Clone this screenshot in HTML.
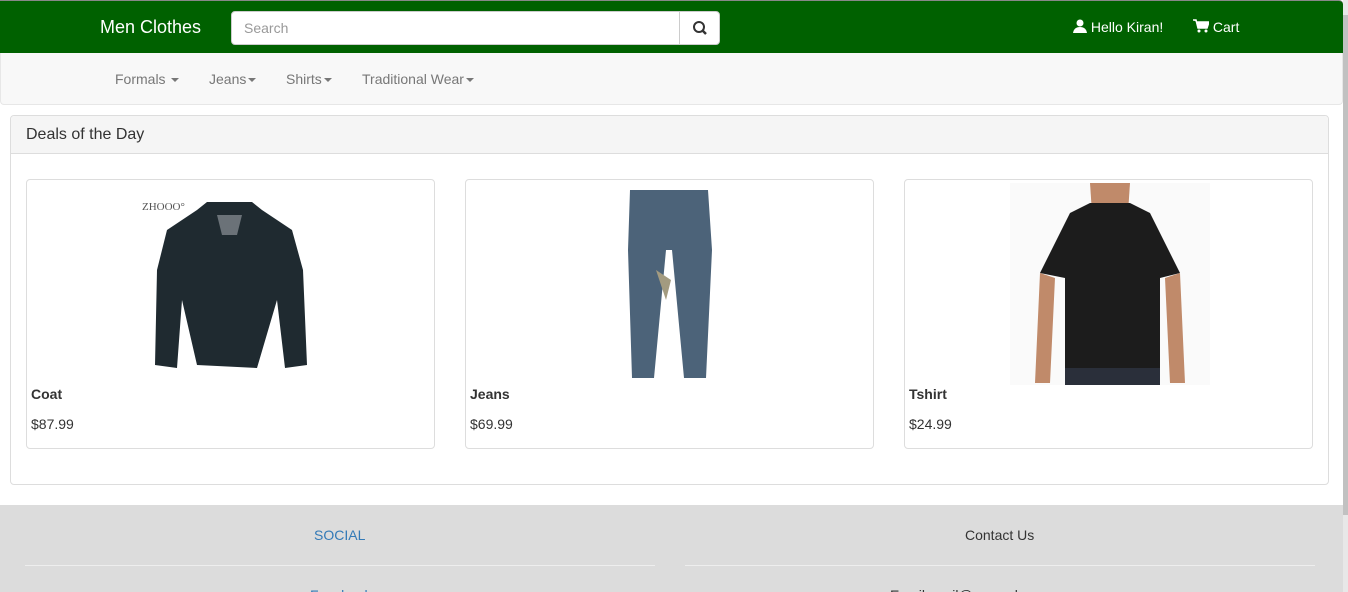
<!DOCTYPE html>
<html style="width:1348px;height:592px;overflow:hidden"><head><style>
*{box-sizing:border-box;margin:0;padding:0}
body{width:1348px;height:592px;overflow:hidden;font-family:"Liberation Sans",sans-serif;font-size:14px;color:#333;background:#fff;position:relative}
.top{position:absolute;left:0;top:0;width:1343px;height:53px;background:#006100;border-top:1px solid #888;border-radius:0 4px 0 0}
.brand{position:absolute;left:100px;top:16px;color:#fff;font-size:18px}
.search{position:absolute;left:231px;top:10px;width:489px;height:34px;background:#fff;border-radius:4px;border:1px solid #ccc}
.search span{position:absolute;left:12px;top:8px;color:#999;font-size:14px}
.search .btn{position:absolute;right:0;top:0;width:40px;height:32px;border-left:1px solid #ccc}
.user{position:absolute;left:1073px;top:18px;color:#fff;font-size:14px}
.cart{position:absolute;left:1193px;top:18px;color:#fff;font-size:14px}
.nav2{position:absolute;left:0;top:53px;width:1343px;height:52px;background:#f8f8f8;border:1px solid #e7e7e7;border-top:none;border-radius:0 0 4px 4px}
.nav2 a{position:absolute;top:18px;color:#777;font-size:14px}
.caret{display:inline-block;border-top:4px solid #777;border-left:4px solid transparent;border-right:4px solid transparent;vertical-align:middle;margin-left:2px}
.panel{position:absolute;left:10px;top:115px;width:1319px;height:370px;border:1px solid #ddd;border-radius:4px}
.ph{height:38px;background:#f5f5f5;border-bottom:1px solid #ddd;padding:10px 15px;font-size:16px;border-radius:4px 4px 0 0}
.card{position:absolute;top:63px;width:409px;height:270px;border:1px solid #ddd;border-radius:4px}
.card b{position:absolute;left:4px;top:206px;font-size:14px}
.card .p{position:absolute;left:4px;top:236px}
.foot{position:absolute;left:0;top:505px;width:1343px;height:87px;background:#dcdcdc;overflow:hidden}
.sb{position:absolute;right:0;top:0;width:5px;height:592px;background:#e8e8e8}
.sb div{position:absolute;left:0;top:15px;width:5px;height:500px;background:#c1c1c1}
</style></head><body>
<div class="top">
<div class="brand">Men Clothes</div>
<div class="search"><span>Search</span><div class="btn"><svg width="40" height="32" viewBox="0 0 40 32"><circle cx="19" cy="15" r="5" fill="none" stroke="#333" stroke-width="2"/><line x1="22.5" y1="18.5" x2="26" y2="22" stroke="#333" stroke-width="2.5"/></svg></div></div>
<div class="user"><svg width="14" height="14" viewBox="0 0 14 14" style="vertical-align:-1px"><circle cx="7" cy="4" r="3.5" fill="#fff"/><path d="M0 14 Q1 8 7 8 Q13 8 14 14Z" fill="#fff"/></svg> Hello Kiran!</div>
<div class="cart"><svg width="16" height="14" viewBox="0 0 16 14" style="vertical-align:-1px"><path d="M0 1H3L5 9H14L16 3H4" fill="#fff" stroke="#fff" stroke-width="1.5"/><circle cx="6" cy="12" r="1.5" fill="#fff"/><circle cx="13" cy="12" r="1.5" fill="#fff"/></svg> Cart</div>
</div>
<div class="nav2">
<a style="left:114px">Formals <span class="caret"></span></a>
<a style="left:208px">Jeans<span class="caret"></span></a>
<a style="left:285px">Shirts<span class="caret"></span></a>
<a style="left:361px">Traditional Wear<span class="caret"></span></a>
</div>
<div class="panel">
<div class="ph">Deals of the Day</div>
<div class="card" style="left:15px">
<svg style="position:absolute;left:110px;top:10px" width="200" height="195"><text x="5" y="20" font-size="11" fill="#555" font-family="Liberation Serif">ZHOOO°</text><path d="M70 12 L60 20 L30 40 L20 80 L18 175 L40 178 L45 110 L60 175 L120 178 L140 110 L148 178 L170 175 L166 80 L155 40 L125 20 L115 12 Z" fill="#1f2a30"/><path d="M80 25 L105 25 L100 45 L85 45Z" fill="#6b7278"/></svg>
<b>Coat</b><div class="p">$87.99</div></div>
<div class="card" style="left:454px">
<svg style="position:absolute;left:160px;top:10px" width="90" height="190"><path d="M4 0 H82 L86 60 L80 188 H58 L46 60 L40 60 L28 188 H6 L2 60 Z" fill="#4c6379"/><path d="M30 80 L45 90 L40 110Z" fill="#a39b80"/></svg>
<b>Jeans</b><div class="p">$69.99</div></div>
<div class="card" style="left:893px">
<svg style="position:absolute;left:105px;top:3px" width="200" height="202"><rect width="200" height="202" fill="#fafafa"/><path d="M80 0 H120 L118 30 L82 30Z" fill="#c08a6a"/><path d="M60 30 L80 20 L120 20 L140 30 L170 90 L150 95 L150 200 L55 200 L55 95 L30 90 Z" fill="#1c1c1c"/><path d="M30 90 L25 200 L40 200 L45 95Z M170 90 L175 200 L160 200 L155 95Z" fill="#c08a6a"/><rect x="55" y="185" width="95" height="17" fill="#2a2f3a"/></svg>
<b>Tshirt</b><div class="p">$24.99</div></div>
</div>
<div class="foot">
<div style="position:absolute;left:314px;top:22px;color:#337ab7">SOCIAL</div>
<div style="position:absolute;left:965px;top:22px">Contact Us</div>
<div style="position:absolute;left:25px;top:60px;width:630px;height:1px;background:#eee"></div>
<div style="position:absolute;left:685px;top:60px;width:630px;height:1px;background:#eee"></div>
<div style="position:absolute;left:310px;top:82px;color:#337ab7">Facebook</div>
<div style="position:absolute;left:890px;top:82px">Email: mail@example.com</div>
</div>
<div class="sb"><div></div></div>
</body></html>
